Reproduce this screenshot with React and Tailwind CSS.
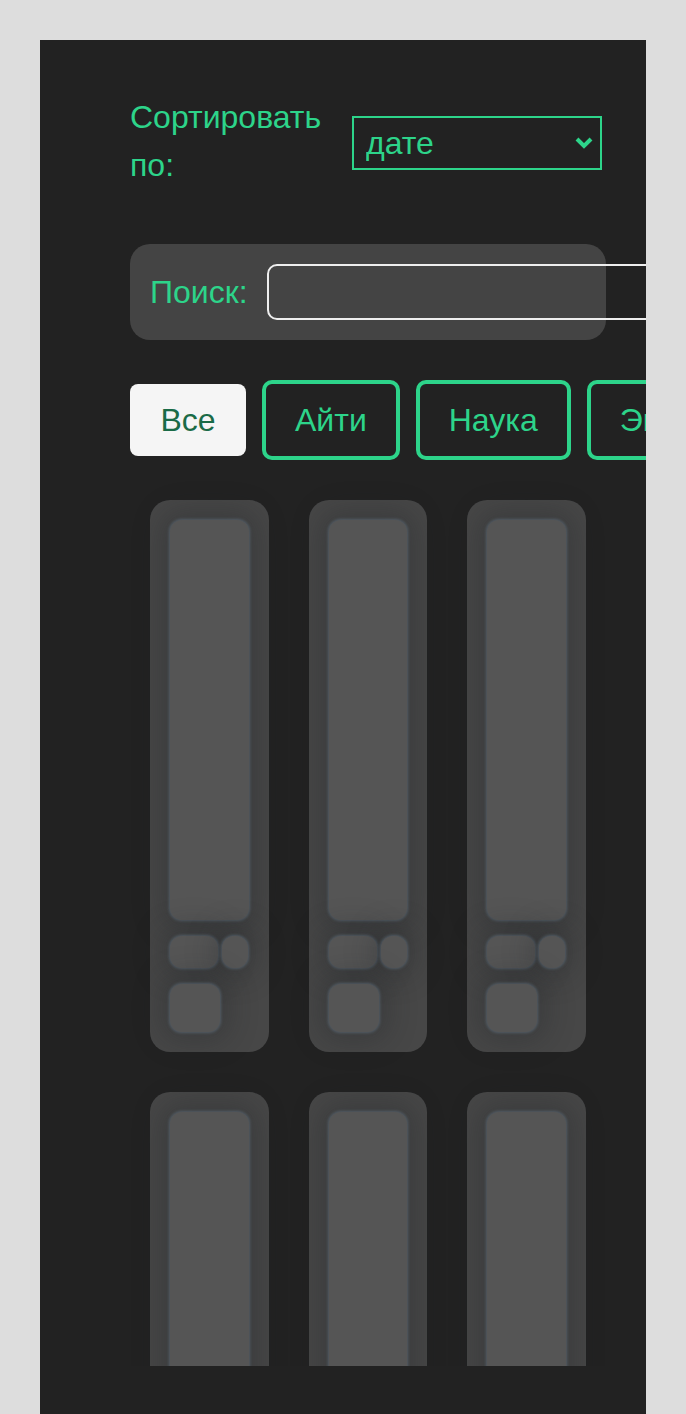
import React from "react";

const font = { fontFamily: '"Liberation Sans", Arial, sans-serif' };

function Bone({ className }) {
  return (
    <div
      className={
        "bg-[#555555] rounded-[12px] shadow-[0_0_3px_1px_rgba(95,110,125,0.65),0_0_28px_10px_rgba(30,32,36,0.28)] " +
        className
      }
    />
  );
}

function SkeletonCard() {
  return (
    <div className="h-[552px] rounded-[20px] bg-[#474747] p-5 flex flex-col gap-4">
      <Bone className="h-[400px] w-full shrink-0" />
      <div className="flex h-8 gap-1 shrink-0">
        <Bone className="w-[48px] h-8 rounded-[10px]" />
        <Bone className="w-[26px] h-8 rounded-[10px]" />
      </div>
      <Bone className="w-[50px] h-12 rounded-[10px] shrink-0" />
    </div>
  );
}

export default function App() {
  const cats = ["Айти", "Наука", "Экономика", "Спорт"];
  return (
    <div className="bg-[#dddddd] pt-10 px-10" style={font}>
      <div className="bg-[#222222] pl-[90px] pr-10 pt-[53px] pb-[120px] overflow-hidden">
        {/* Sort */}
        <div className="flex items-center gap-[30px] w-[472px]">
          <div className="w-[192px] text-[32px] leading-[48px] text-[#2dd48a]">
            Сортировать по:
          </div>
          <div className="relative w-[250px] h-[54px] border-2 border-[#2dd48a] mt-[4px]">
            <select
              className="appearance-none w-full h-full bg-transparent text-[#2dd48a] text-[32px] pl-3 outline-none"
              style={font}
              defaultValue="date"
            >
              <option value="date">дате</option>
              <option value="name">названию</option>
            </select>
            <svg
              className="absolute right-[6px] top-[18px] pointer-events-none"
              width="20"
              height="14"
              viewBox="0 0 20 14"
            >
              <path d="M3 3 L10 10 L17 3" fill="none" stroke="#2dd48a" strokeWidth="4" />
            </svg>
          </div>
        </div>

        {/* Search */}
        <div className="mt-[55px] h-24 w-[476px] rounded-[20px] bg-[#444444] px-5 flex items-center gap-[19px]">
          <span className="text-[32px] text-[#2dd48a] shrink-0">Поиск:</span>
          <input
            type="text"
            className="shrink-0 w-[420px] h-14 rounded-[10px] border-2 border-[#eeeeee] bg-transparent outline-none text-white text-[24px] px-3"
            style={font}
          />
        </div>

        {/* Categories */}
        <div className="mt-10 flex items-center gap-4">
          <button
            className="shrink-0 h-[72px] w-[116px] rounded-[8px] bg-[#f5f5f5] text-[#1a6b47] text-[32px]"
            style={font}
          >
            Все
          </button>
          {cats.map((c) => (
            <button
              key={c}
              className="shrink-0 h-20 px-[29px] rounded-[10px] border-4 border-[#2dd48a] bg-transparent text-[#2dd48a] text-[32px]"
              style={font}
            >
              {c}
            </button>
          ))}
        </div>

        {/* Cards */}
        <div className="mt-5 w-[476px] h-[886px] overflow-hidden p-5">
          <div className="grid grid-cols-3 gap-x-10 gap-y-10">
            {Array.from({ length: 6 }).map((_, i) => (
              <SkeletonCard key={i} />
            ))}
          </div>
        </div>
      </div>
    </div>
  );
}
